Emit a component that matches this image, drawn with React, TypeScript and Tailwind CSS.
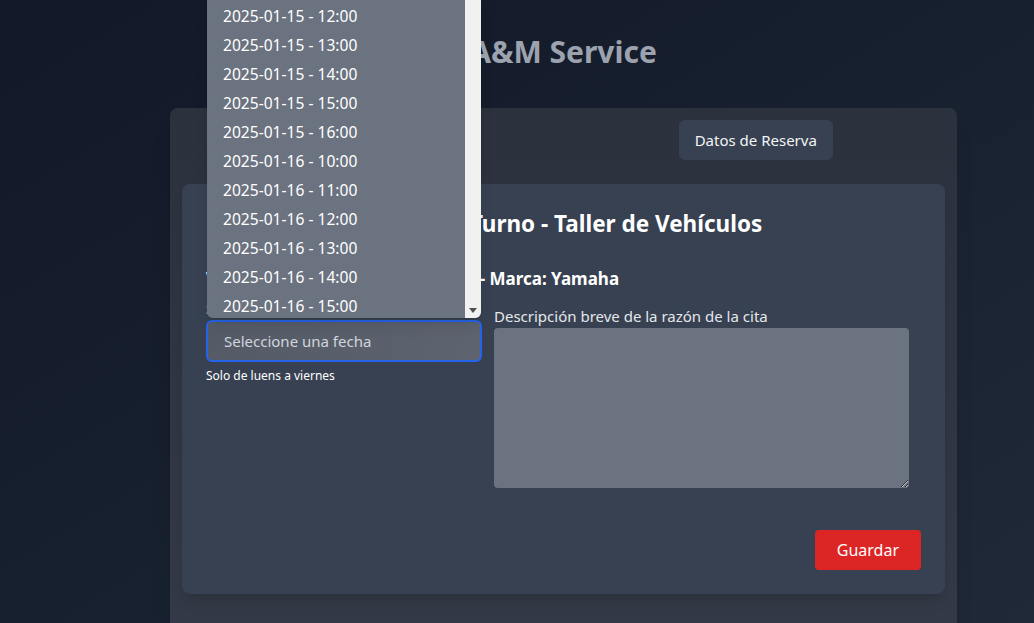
import { useState } from 'react';

const horarios = [
  '2025-01-15 - 10:00',
  '2025-01-15 - 11:00',
  '2025-01-15 - 12:00',
  '2025-01-15 - 13:00',
  '2025-01-15 - 14:00',
  '2025-01-15 - 15:00',
  '2025-01-15 - 16:00',
  '2025-01-16 - 10:00',
  '2025-01-16 - 11:00',
  '2025-01-16 - 12:00',
  '2025-01-16 - 13:00',
  '2025-01-16 - 14:00',
  '2025-01-16 - 15:00',
];

const FechaDropdown = () => (
  <div className="absolute left-[1px] right-[1px] bottom-[calc(100%+2px)] h-[318px] flex overflow-hidden rounded-b-md bg-[#6b7280] shadow-lg">
    <div className="flex-1 flex flex-col justify-end overflow-hidden">
      <ul className="-mb-[3px]">
        {horarios.map((h) => (
          <li key={h} className="h-[29px] flex items-center px-4 text-[15.6px] text-white">
            {h}
          </li>
        ))}
      </ul>
    </div>
    <div className="w-4 bg-[#f1f1f1] flex flex-col justify-end items-center pb-[5px]">
      <div className="w-0 h-0 border-l-[4px] border-r-[4px] border-t-[5px] border-l-transparent border-r-transparent border-t-[#505050]" />
    </div>
  </div>
);

export default function App() {
  const [tab, setTab] = useState('reserva');
  const [descripcion, setDescripcion] = useState('');

  return (
    <div
      className="min-h-screen bg-gradient-to-br from-[#111827] to-[#1f2937] text-white"
      style={{ fontFamily: '"Noto Sans", "Open Sans", sans-serif' }}
    >
      <div className="pl-[93px] h-[623px] overflow-hidden">
        <h1 className="pt-[32px] text-center text-[30px] leading-[40px] font-bold text-[#9ca3af]">
          A&amp;M Service
        </h1>

        <div className="mx-auto mt-[36px] w-[787px] rounded-lg bg-gradient-to-b from-[#2b313d] to-[#343a47] px-3 pt-3 pb-16 shadow-xl">
          <div className="grid grid-cols-2 justify-items-center pl-[6px]">
            <button
              onClick={() => setTab('vehiculo')}
              className={`px-4 py-2 rounded-md text-[15px] leading-6 ${tab === 'vehiculo' ? 'bg-[#374151] text-gray-100' : 'text-gray-400'}`}
            >
              Datos del Vehículo
            </button>
            <button
              onClick={() => setTab('reserva')}
              className={`px-4 py-2 rounded-md text-[15px] leading-6 ${tab === 'reserva' ? 'bg-[#374151] text-gray-100' : 'text-gray-400'}`}
            >
              Datos de Reserva
            </button>
          </div>

          <div className="mt-6 rounded-lg bg-[#374151] px-6 pt-6 pb-6 shadow-lg">
            <h2 className="text-center text-[22.5px] leading-8 font-bold text-white">
              Reservar Turno - Taller de Vehículos
            </h2>
            <p className="mt-[25px] text-[17px] leading-7 font-bold text-white">
              Vehículo: Moto - Modelo: YZF-R3 - Marca: Yamaha
            </p>

            <div className="mt-[3px] flex gap-3">
              <div className="w-[276px] shrink-0">
                <label className="block text-[15px] leading-6 text-gray-200">Seleccione fecha y hora</label>
                <div className="relative">
                  <div className="h-[42px] flex items-center rounded-md border-2 border-[#2563eb] bg-gradient-to-r from-[#545b67] to-[#5d636f] px-4 text-[15px] text-gray-300">
                    Seleccione una fecha
                  </div>
                  <FechaDropdown />
                </div>
                <p className="mt-[6px] text-[12px] leading-4 text-white">Solo de luens a viernes</p>
              </div>

              <div className="flex-1 pt-2">
                <label className="block text-[15px] leading-6 text-gray-200">
                  Descripción breve de la razón de la cita
                </label>
                <textarea
                  value={descripcion}
                  onChange={(e) => setDescripcion(e.target.value)}
                  className="block w-[415px] h-[160px] rounded bg-[#6b7280] text-white p-2 outline-none"
                />
              </div>
            </div>

            <div className="mt-[42px] flex justify-end">
              <button className="h-10 px-[22px] rounded bg-[#dc2626] text-[16px] text-white">Guardar</button>
            </div>
          </div>
        </div>
      </div>
    </div>
  );
}
